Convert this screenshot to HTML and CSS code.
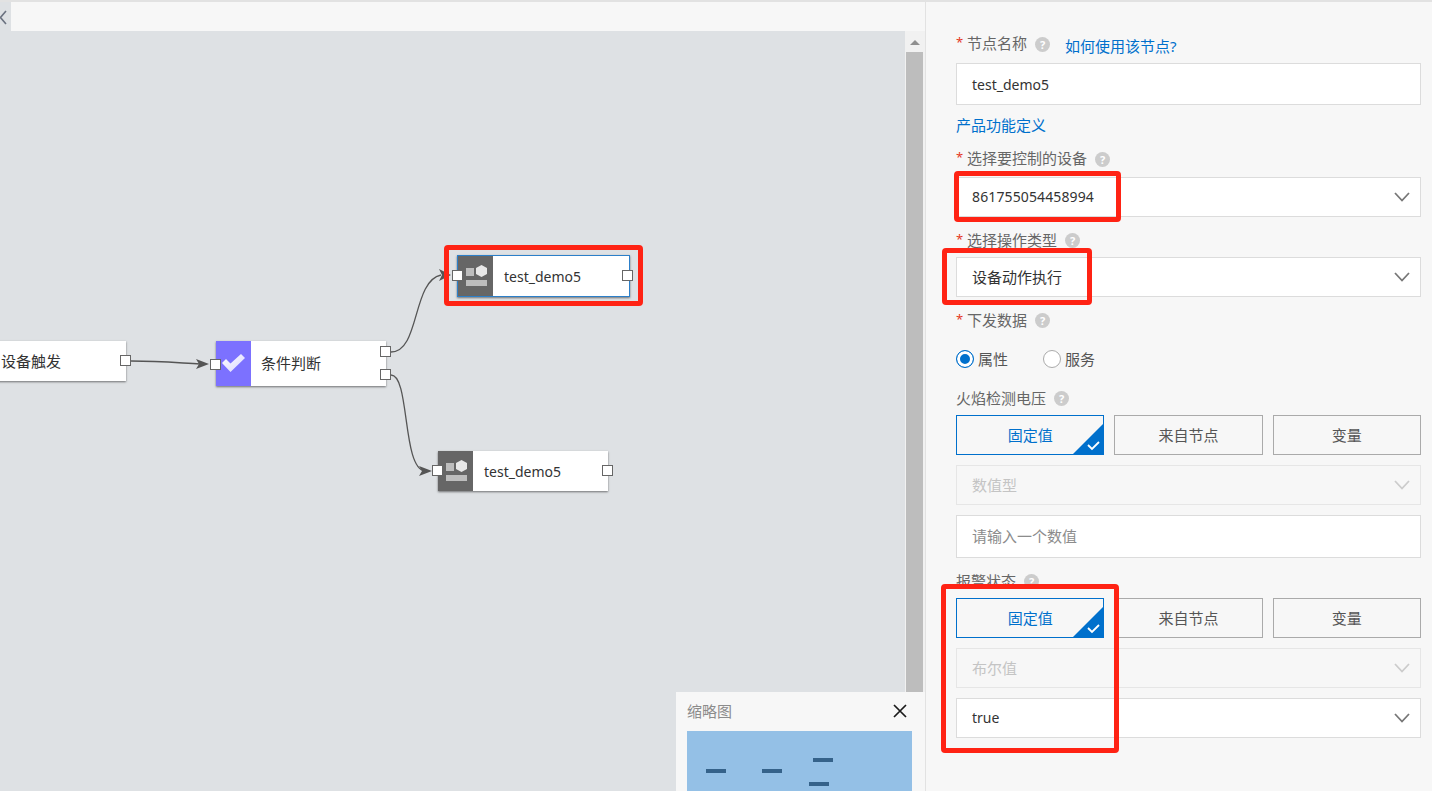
FILE: index.html
```html
<!DOCTYPE html>
<html lang="en">
<head>
    <meta charset="UTF-8">
    <title>规则编排</title>
    <link rel="stylesheet" href="styles.css">
</head>
<body>

<div class="app">
    <div class="main">
        <div class="topbar">
            <div class="collapse">
                <svg width="11" height="29" viewBox="0 0 11 29"><path d="M6 9 L0.500 15.500 L6 22" fill="none" stroke="#6b7280" stroke-width="1.6"/></svg>
            </div>
            <div class="topbar_fill"></div>
        </div>

        <div class="work">
            <div class="canvas">
                <!-- edges, coordinates are relative to the canvas -->
                <svg class="edges" width="905" height="760" viewBox="0 0 905 760">
                    <path d="M131 330 C160 330 180 332 200 333" fill="none" stroke="#555" stroke-width="1.4"/>
                    <path d="M196 328 L209 333 L196 338 L199 333 Z" fill="#555"/>
                    <path d="M391 321 C420 321 412 250 441 244" fill="none" stroke="#555" stroke-width="1.3"/>
                    <path d="M439 238 L451 244 L439 250 L442 244 Z" fill="#555"/>
                    <path d="M391 344 C410 344 402 438 425 440" fill="none" stroke="#555" stroke-width="1.3"/>
                    <path d="M419 435 L432 440 L419 445 L422 440 Z" fill="#555"/>
                </svg>

                <div class="node node_trigger">
                    <span class="node_text">设备触发</span>
                    <i class="port port_right"></i>
                </div>

                <div class="node node_cond">
                    <div class="node_icon icon_purple">
                        <svg width="35" height="45" viewBox="0 0 35 45">
                            <defs>
                                <linearGradient id="check_fill" x1="0" y1="0" x2="1" y2="1">
                                    <stop offset="0" stop-color="#ffffff"/>
                                    <stop offset="1" stop-color="#d9d5ff"/>
                                </linearGradient>
                            </defs>
                            <path d="M6 22 L10 18 L14.500 22.500 L25 13 L29 17 L14.500 31 Z" fill="url(#check_fill)"/>
                        </svg>
                    </div>
                    <span class="node_text">条件判断</span>
                    <i class="port port_left"></i>
                    <i class="port port_right port_top"></i>
                    <i class="port port_right port_bottom"></i>
                </div>

                <div class="node node_act node_selected">
                    <div class="node_icon">
                        <svg width="35" height="40" viewBox="0 0 35 40">
                            <rect x="8" y="12" width="8" height="8" fill="#bdbdbd"/>
                            <path d="M23.500 9 L29 12 L29 18 L23.500 21 L18 18 L18 12 Z" fill="#e8e8e8"/>
                            <rect x="8" y="24" width="21" height="6" fill="#bdbdbd"/>
                        </svg>
                    </div>
                    <span class="node_text node_text_en">test_demo5</span>
                    <i class="port port_left"></i>
                    <i class="port port_right"></i>
                </div>

                <div class="node node_act2">
                    <div class="node_icon">
                        <svg width="35" height="40" viewBox="0 0 35 40">
                            <rect x="8" y="12" width="8" height="8" fill="#bdbdbd"/>
                            <path d="M23.500 9 L29 12 L29 18 L23.500 21 L18 18 L18 12 Z" fill="#e8e8e8"/>
                            <rect x="8" y="24" width="21" height="6" fill="#bdbdbd"/>
                        </svg>
                    </div>
                    <span class="node_text node_text_en">test_demo5</span>
                    <i class="port port_left"></i>
                    <i class="port port_right"></i>
                </div>

                <div class="mark mark_node"></div>
            </div>

            <div class="scrollbar">
                <div class="scroll_up"></div>
                <div class="scroll_thumb"></div>
            </div>

            <div class="minimap">
                <div class="minimap_head">
                    <span>缩略图</span>
                    <svg width="14" height="14" viewBox="0 0 14 14"><path d="M1 1 L13 13 M13 1 L1 13" stroke="#1a1a1a" stroke-width="1.7"/></svg>
                </div>
                <div class="minimap_view">
                    <i class="dash dash_a"></i>
                    <i class="dash dash_b"></i>
                    <i class="dash dash_c"></i>
                    <i class="dash dash_d"></i>
                </div>
            </div>
        </div>
    </div>

    <div class="panel">
        <div class="label label_first">
            <em>*</em>节点名称<i class="help">?</i><a class="link link_help">如何使用该节点?</a>
        </div>
        <div class="box box_tall">test_demo5</div>

        <a class="link link_def">产品功能定义</a>

        <div class="label label_device"><em>*</em>选择要控制的设备<i class="help">?</i></div>
        <div class="box box_num">861755054458994<svg class="chev" width="16" height="10" viewBox="0 0 16 10"><path d="M1 1 L8 8.500 L15 1" fill="none" stroke="#777" stroke-width="1.800"/></svg></div>

        <div class="label"><em>*</em>选择操作类型<i class="help">?</i></div>
        <div class="box box_cn">设备动作执行<svg class="chev" width="16" height="10" viewBox="0 0 16 10"><path d="M1 1 L8 8.500 L15 1" fill="none" stroke="#777" stroke-width="1.800"/></svg></div>

        <div class="label"><em>*</em>下发数据<i class="help">?</i></div>
        <div class="radios">
            <span class="radio radio_on"><i></i>属性</span>
            <span class="radio"><i></i>服务</span>
        </div>

        <div class="label label_plain">火焰检测电压<i class="help">?</i></div>
        <div class="tabs">
            <div class="tab tab_on">固定值
                <svg class="tab_corner" width="32" height="32" viewBox="0 0 32 32">
                    <path d="M32 0 L32 32 L0 32 Z" fill="#0070cc"/>
                    <path d="M16 22 L20 26 L27 19" fill="none" stroke="#fff" stroke-width="1.800"/>
                </svg>
            </div>
            <div class="tab">来自节点</div>
            <div class="tab">变量</div>
        </div>
        <div class="box box_cn box_off box_gap">数值型<svg class="chev" width="16" height="10" viewBox="0 0 16 10"><path d="M1 1 L8 8.500 L15 1" fill="none" stroke="#ccc" stroke-width="1.800"/></svg></div>
        <div class="box box_cn box_tall box_gap box_hint">请输入一个数值</div>

        <div class="label label_plain2">报警状态<i class="help">?</i></div>
        <div class="tabs">
            <div class="tab tab_on">固定值
                <svg class="tab_corner" width="32" height="32" viewBox="0 0 32 32">
                    <path d="M32 0 L32 32 L0 32 Z" fill="#0070cc"/>
                    <path d="M16 22 L20 26 L27 19" fill="none" stroke="#fff" stroke-width="1.800"/>
                </svg>
            </div>
            <div class="tab">来自节点</div>
            <div class="tab">变量</div>
        </div>
        <div class="box box_cn box_off box_gap">布尔值<svg class="chev" width="16" height="10" viewBox="0 0 16 10"><path d="M1 1 L8 8.500 L15 1" fill="none" stroke="#ccc" stroke-width="1.800"/></svg></div>
        <div class="box box_gap">true<svg class="chev" width="16" height="10" viewBox="0 0 16 10"><path d="M1 1 L8 8.500 L15 1" fill="none" stroke="#777" stroke-width="1.800"/></svg></div>

        <div class="mark mark_device"></div>
        <div class="mark mark_type"></div>
        <div class="mark mark_alarm"></div>
    </div>
</div>

</body>
</html>
```

FILE: styles.css
```css
*{
    box-sizing: border-box;
}

body{
    margin: 0;
    height: 791px;
    overflow: hidden;
    background-color: #f7f7f7;
    font-family: "Noto Sans", "Noto Sans CJK SC", sans-serif;
    font-size: 14px;
    color: #333;
}

.app{
    display: flex;
    height: 791px;
    border-top: 2px solid #e2e2e2;
}

/* left side */
.main{
    width: 926px;
    display: flex;
    flex-direction: column;
    border-right: 1px solid #e2e2e2;
}

.topbar{
    display: flex;
    height: 29px;
}

.collapse{
    width: 11px;
    background-color: #dee1e4;
    overflow: hidden;
}

.collapse svg{
    display: block;
}

.topbar_fill{
    flex: 1;
    background-color: #f7f7f7;
}

.work{
    flex: 1;
    display: flex;
    position: relative;
}

.canvas{
    width: 905px;
    position: relative;
    overflow: hidden;
    background-color: #dee1e4;
}

.edges{
    position: absolute;
    top: 0;
    left: 0;
}

.scrollbar{
    width: 20px;
    background-color: #f1f1f1;
}

.scroll_up{
    width: 0;
    height: 0;
    margin: 9px 0 0 5px;
    border-left: 5px solid transparent;
    border-right: 5px solid transparent;
    border-bottom: 5px solid #8f8f8f;
}

.scroll_thumb{
    width: 17px;
    height: 700px;
    margin: 7px 0 0 1px;
    background-color: #bdbdbd;
}

/* nodes sit on a free canvas */
.node{
    position: absolute;
    display: flex;
    align-items: center;
    background-color: #fff;
    box-shadow: 0 1px 2px rgba(0, 0, 0, 0.5);
    font-size: 15px;
}

.node_trigger{
    left: -10px;
    top: 310px;
    width: 136px;
    height: 40px;
    padding-left: 11px;
}

.node_cond{
    left: 216px;
    top: 310px;
    width: 170px;
    height: 45px;
}

.node_act{
    left: 457px;
    top: 224px;
    width: 173px;
    height: 42px;
    border: 1px solid #2c7fc9;
}

.node_act2{
    left: 438px;
    top: 420px;
    width: 170px;
    height: 40px;
}

.node_icon{
    width: 35px;
    height: 100%;
    background-color: #666;
    flex-shrink: 0;
}

.node_icon svg{
    display: block;
}

.icon_purple{
    background-color: #7c71ff;
}

.node_text{
    margin-left: 10px;
    margin-bottom: 2px;
}

.node_text_en{
    margin-left: 11px;
    margin-bottom: 0;
    font-size: 14px;
}

.node_trigger .node_text{
    margin-left: 0;
}

.port{
    position: absolute;
    width: 11px;
    height: 11px;
    background-color: #fff;
    border: 1px solid #666;
    top: 50%;
    margin-top: -6px;
}

.port_left{
    left: -6px;
}

.port_right{
    right: -5px;
}

.node_selected .port_right{
    right: -4px;
}

.node_cond .port_left{
    margin-top: -5px;
    top: 50%;
}

.port_top{
    top: 5px;
    margin-top: 0;
}

.port_bottom{
    top: 28px;
    margin-top: 0;
}

/* minimap */
.minimap{
    position: absolute;
    right: 0;
    bottom: 0;
    width: 249px;
    height: 99px;
    padding: 0 13px 0 11px;
    background-color: #f7f7f7;
}

.minimap_head{
    display: flex;
    justify-content: space-between;
    align-items: center;
    height: 39px;
    padding-right: 5px;
    color: #8c8c8c;
    font-size: 15px;
}

.minimap_head span{
    margin-bottom: 3px;
}

.minimap_head svg{
    margin-bottom: 2px;
}

.minimap_view{
    position: relative;
    height: 60px;
    background-color: #94c0e6;
}

.dash{
    position: absolute;
    width: 20px;
    height: 4px;
    background-color: #35628a;
}

.dash_a{ left: 19px; top: 38px; }
.dash_b{ left: 75px; top: 38px; }
.dash_c{ left: 126px; top: 27px; }
.dash_d{ left: 122px; top: 51px; }

/* right panel */
.panel{
    flex: 1;
    position: relative;
    padding: 32px 11px 0 30px;
    font-size: 15px;
}

.label{
    display: flex;
    align-items: center;
    height: 20px;
    padding-bottom: 2px;
    margin: 13px 0 7px;
    color: #666;
}

.label em{
    width: 11px;
    color: #e5391f;
    font-size: 13px;
    font-style: normal;
}

.label_first{
    padding-bottom: 4px;
    margin: 0 0 9px;
}

.label_device{
    padding-bottom: 4px;
    margin-top: 14px;
    margin-bottom: 8px;
}

.label_plain{
    margin-top: 19px;
}

.label_plain2{
    margin-top: 13px;
}

.help{
    width: 15px;
    height: 15px;
    margin-left: 8px;
    margin-top: 2px;
    border-radius: 50%;
    background-color: #ccc;
    color: #fff;
    font-size: 11px;
    font-style: normal;
    font-weight: bold;
    line-height: 15px;
    text-align: center;
}

.label_first .help,
.label_device .help{
    margin-top: 4px;
}

.link{
    color: #0070cc;
    font-size: 15px;
}

.link_help{
    margin-left: 15px;
    position: relative;
    top: 3px;
}

.link_def{
    display: block;
    height: 20px;
    line-height: 20px;
    margin-top: 10px;
}

.box{
    display: flex;
    justify-content: space-between;
    align-items: center;
    height: 40px;
    padding: 0 10px 2px 15px;
    background-color: #fff;
    border: 1px solid #dcdcdc;
    color: #333;
    font-size: 14px;
}

.box_cn{
    font-size: 15px;
}

.box_num{
    letter-spacing: 0.12px;
}

.box_tall{
    height: 42px;
    padding-bottom: 0;
}

.box_gap{
    margin-top: 10px;
}

.box_hint{
    height: 43px;
    padding-bottom: 2px;
    color: #8c8c8c;
}

.box_off{
    background-color: #f7f7f7;
    border-color: #e6e6e6;
    color: #c4c4c4;
}

.chev{
    margin-top: 2px;
}

.radios{
    display: flex;
    align-items: center;
    gap: 35px;
    height: 20px;
    margin-top: 19px;
    color: #555;
    font-size: 15px;
}

.radio{
    display: flex;
    align-items: center;
    gap: 4px;
    line-height: 18px;
}

.radio i{
    width: 18px;
    height: 18px;
    border: 1px solid #aaa;
    border-radius: 50%;
    background-color: #fff;
}

.radio_on i{
    border-color: #0070cc;
    background-color: #0070cc;
    box-shadow: inset 0 0 0 3px #fff;
}

.tabs{
    display: flex;
    gap: 10px;
}

.tab{
    flex: 1;
    position: relative;
    height: 40px;
    line-height: 38px;
    text-align: center;
    border: 1px solid #aaa;
    color: #555;
    font-size: 15px;
}

.tab_on{
    border-color: #0070cc;
    color: #0070cc;
}

.tab_corner{
    position: absolute;
    right: -1px;
    bottom: -1px;
}

/* red marks drawn over the screenshot */
.mark{
    position: absolute;
    border: 5px solid #ff2314;
    border-radius: 4px;
}

.mark_node{
    left: 444px;
    top: 214px;
    width: 199px;
    height: 61px;
}

.mark_device{
    left: 28px;
    top: 169px;
    width: 167px;
    height: 51px;
}

.mark_type{
    left: 16px;
    top: 246px;
    width: 150px;
    height: 57px;
}

.mark_alarm{
    left: 15px;
    top: 582px;
    width: 178px;
    height: 169px;
}
```
